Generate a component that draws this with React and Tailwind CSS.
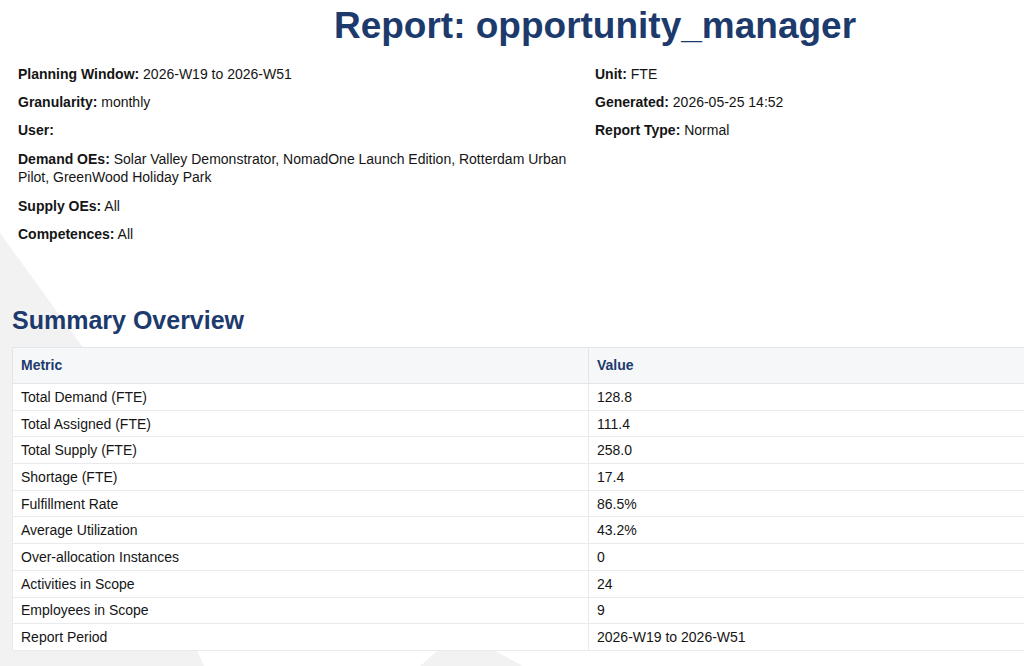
import React from 'react';

const LEFT_INFO = [
  ['Planning Window:', '2026-W19 to 2026-W51'],
  ['Granularity:', 'monthly'],
  ['User:', ''],
  ['Demand OEs:', 'Solar Valley Demonstrator, NomadOne Launch Edition, Rotterdam Urban Pilot, GreenWood Holiday Park'],
  ['Supply OEs:', 'All'],
  ['Competences:', 'All'],
];

const RIGHT_INFO = [
  ['Unit:', 'FTE'],
  ['Generated:', '2026-05-25 14:52'],
  ['Report Type:', 'Normal'],
];

const SUMMARY = [
  ['Total Demand (FTE)', '128.8'],
  ['Total Assigned (FTE)', '111.4'],
  ['Total Supply (FTE)', '258.0'],
  ['Shortage (FTE)', '17.4'],
  ['Fulfillment Rate', '86.5%'],
  ['Average Utilization', '43.2%'],
  ['Over-allocation Instances', '0'],
  ['Activities in Scope', '24'],
  ['Employees in Scope', '9'],
  ['Report Period', '2026-W19 to 2026-W51'],
];

function InfoLine({ label, value, wide }) {
  return (
    <p className={wide ? 'pt-[1px] mb-[11px]' : 'mb-[10px]'}>
      <span className="font-bold">{label}</span>
      {value ? ' ' + value : ''}
    </p>
  );
}

// faint watermark shapes behind the page
function Watermark() {
  return (
    <svg className="absolute inset-0 pointer-events-none" width="1190" height="666" viewBox="0 0 1190 666">
      <polygon points="0,233 92,360 150,470 197,650 204,666 0,666" fill="#f2f2f2" />
      <polygon points="459,632 420,666 523,666" fill="#f2f2f2" />
    </svg>
  );
}

export default function App() {
  return (
    <div className="relative w-[1024px] h-[666px] overflow-hidden bg-white font-['Liberation_Sans',Arial,sans-serif] text-[#151515]">
      <div className="relative w-[1190px]">
        <Watermark />

        <div className="relative">
          <h1 className="text-center text-[37px] font-bold leading-[44px] pt-[4px] text-[#1d3a6c]">
            Report: opportunity_manager
          </h1>

          <div className="mt-[17px] px-[18px] grid grid-cols-[559px_1fr] gap-x-[18px] text-[14px] leading-[18px]">
            <div>
              {LEFT_INFO.map(([l, v]) => (
                <InfoLine key={l} label={l} value={v} wide={l === 'Demand OEs:'} />
              ))}
            </div>
            <div>
              {RIGHT_INFO.map(([l, v]) => <InfoLine key={l} label={l} value={v} />)}
            </div>
          </div>

          <h2 className="mt-[52px] px-[12px] text-[25px] font-bold leading-[30px] text-[#1d3a6c]">
            Summary Overview
          </h2>

          <table className="mt-[12px] ml-[12px] w-[1166px] border-collapse text-[14px] bg-white">
            <thead>
              <tr className="bg-[#f6f7f9]">
                <th className="w-[576px] h-[36px] border border-[#e3e5e8] px-2 text-left font-bold text-[#1d3a6c]">Metric</th>
                <th className="h-[36px] border border-[#e3e5e8] px-2 text-left font-bold text-[#1d3a6c]">Value</th>
              </tr>
            </thead>
            <tbody>
              {SUMMARY.map(([metric, value]) => (
                <tr key={metric}>
                  <td className="h-[26.7px] border border-[#e8eaed] px-2 py-0 leading-[18px]">{metric}</td>
                  <td className="h-[26.7px] border border-[#e8eaed] px-2 py-0 leading-[18px]">{value}</td>
                </tr>
              ))}
            </tbody>
          </table>
        </div>
      </div>
    </div>
  );
}
